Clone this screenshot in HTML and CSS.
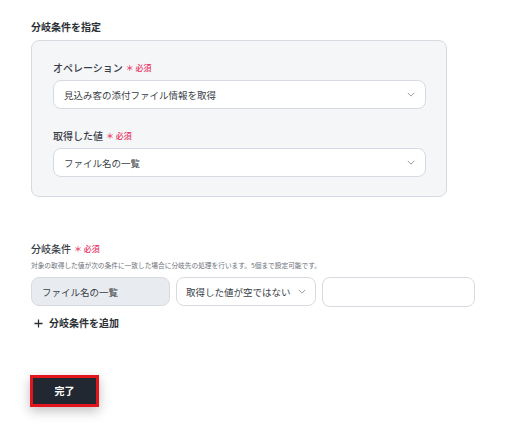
FILE: index.html
```html
<!DOCTYPE html>
<html lang="ja">
<head>
    <meta charset="UTF-8">
    <meta name="viewport" content="width=device-width, initial-scale=1.0">
    <title>分岐条件を指定</title>
    <link rel="stylesheet" href="styles.css">
</head>
<body>
    <main class="page">
        <h3 class="section-title">分岐条件を指定</h3>

        <div class="panel">
            <div class="field">
                <label class="label">オペレーション<span class="req">＊ 必須</span></label>
                <div class="select">
                    <span>見込み客の添付ファイル情報を取得</span>
                    <svg class="chev" viewBox="0 0 10 6"><path d="M1 1l4 4 4-4"/></svg>
                </div>
            </div>
            <div class="field">
                <label class="label">取得した値<span class="req">＊ 必須</span></label>
                <div class="select">
                    <span>ファイル名の一覧</span>
                    <svg class="chev" viewBox="0 0 10 6"><path d="M1 1l4 4 4-4"/></svg>
                </div>
            </div>
        </div>

        <div class="conditions">
            <label class="label">分岐条件<span class="req">＊ 必須</span></label>
            <p class="note">対象の取得した値が次の条件に一致した場合に分岐先の処理を行います。5個まで設定可能です。</p>
            <div class="cond-row">
                <div class="box box-fixed">ファイル名の一覧</div>
                <div class="box box-select">
                    <span>取得した値が空ではない</span>
                    <svg class="chev" viewBox="0 0 10 6"><path d="M1 1l4 4 4-4"/></svg>
                </div>
                <div class="box box-input"></div>
            </div>
            <a href="#" class="add">
                <svg class="plus" viewBox="0 0 10 10"><path d="M5 0.5v9M0.5 5h9"/></svg>
                分岐条件を追加
            </a>
        </div>

        <button class="done">完了</button>
    </main>
</body>
</html>
```

FILE: styles.css
```css
body{
    margin: 0;
    background-color: #fff;
    font-family: "Noto Sans CJK JP", "Noto Sans", sans-serif;
    color: #2b2f36;
}

.page{
    padding: 20px 0 40px 31px;
    width: 444px;
}

.section-title{
    margin: 0 0 6px;
    font-size: 10px;
    line-height: 14px;
    font-weight: 700;
}

.panel{
    box-sizing: border-box;
    width: 416px;
    padding: 20px 20px 19px 21px;
    background-color: #f5f6f8;
    border: 1px solid #d7dbe1;
    border-radius: 8px;
    display: flex;
    flex-direction: column;
    gap: 20px;
}

.field{
    display: flex;
    flex-direction: column;
    gap: 5px;
}

.label{
    display: flex;
    align-items: center;
    font-size: 10px;
    line-height: 14px;
    font-weight: 500;
    color: #3a3f47;
}

.req{
    margin-left: 3px;
    font-size: 8px;
    color: #e8315f;
    font-weight: 500;
}

.select{
    box-sizing: border-box;
    height: 29px;
    padding: 0 10px 0 10px;
    display: flex;
    align-items: center;
    justify-content: space-between;
    background-color: #fff;
    border: 1px solid #d7dbe1;
    border-radius: 8px;
    font-size: 9.5px;
    color: #3a3f47;
}

.chev{
    flex-shrink: 0;
    width: 8px;
    height: 5px;
    fill: none;
    stroke: #8a8f96;
    stroke-width: 1.1;
}

.conditions{
    margin-top: 45px;
}

.note{
    margin: 5px 0 7px;
    font-size: 6.7px;
    line-height: 9px;
    color: #6b7078;
    white-space: nowrap;
}

.cond-row{
    display: flex;
    gap: 6px;
}

.box{
    box-sizing: border-box;
    height: 29px;
    display: flex;
    align-items: center;
    border: 1px solid #d7dbe1;
    border-radius: 8px;
    font-size: 9.5px;
    color: #3a3f47;
    white-space: nowrap;
}

.box-fixed{
    width: 139px;
    padding-left: 10px;
    background-color: #e8ebef;
}

.box-select{
    width: 140px;
    padding: 0 0 0 9px;
    gap: 7px;
    background-color: #fff;
}

.box-input{
    width: 153px;
    height: 30px;
    background-color: #fff;
}

.add{
    margin-top: 9px;
    margin-left: 3px;
    display: inline-flex;
    align-items: center;
    gap: 6px;
    font-size: 10px;
    line-height: 14px;
    font-weight: 700;
    color: #2b2f36;
    text-decoration: none;
}

.plus{
    width: 9px;
    height: 9px;
    stroke: #2b2f36;
    stroke-width: 1.4;
}

.done{
    display: block;
    margin: 42px 0 0 -1px;
    width: 69px;
    height: 32px;
    background-color: #222831;
    border: 3px solid #e3141c;
    color: #fff;
    font-family: inherit;
    font-size: 10px;
    font-weight: 700;
    box-shadow: 0 4px 12px rgba(0, 0, 0, 0.25);
    cursor: pointer;
}
```
